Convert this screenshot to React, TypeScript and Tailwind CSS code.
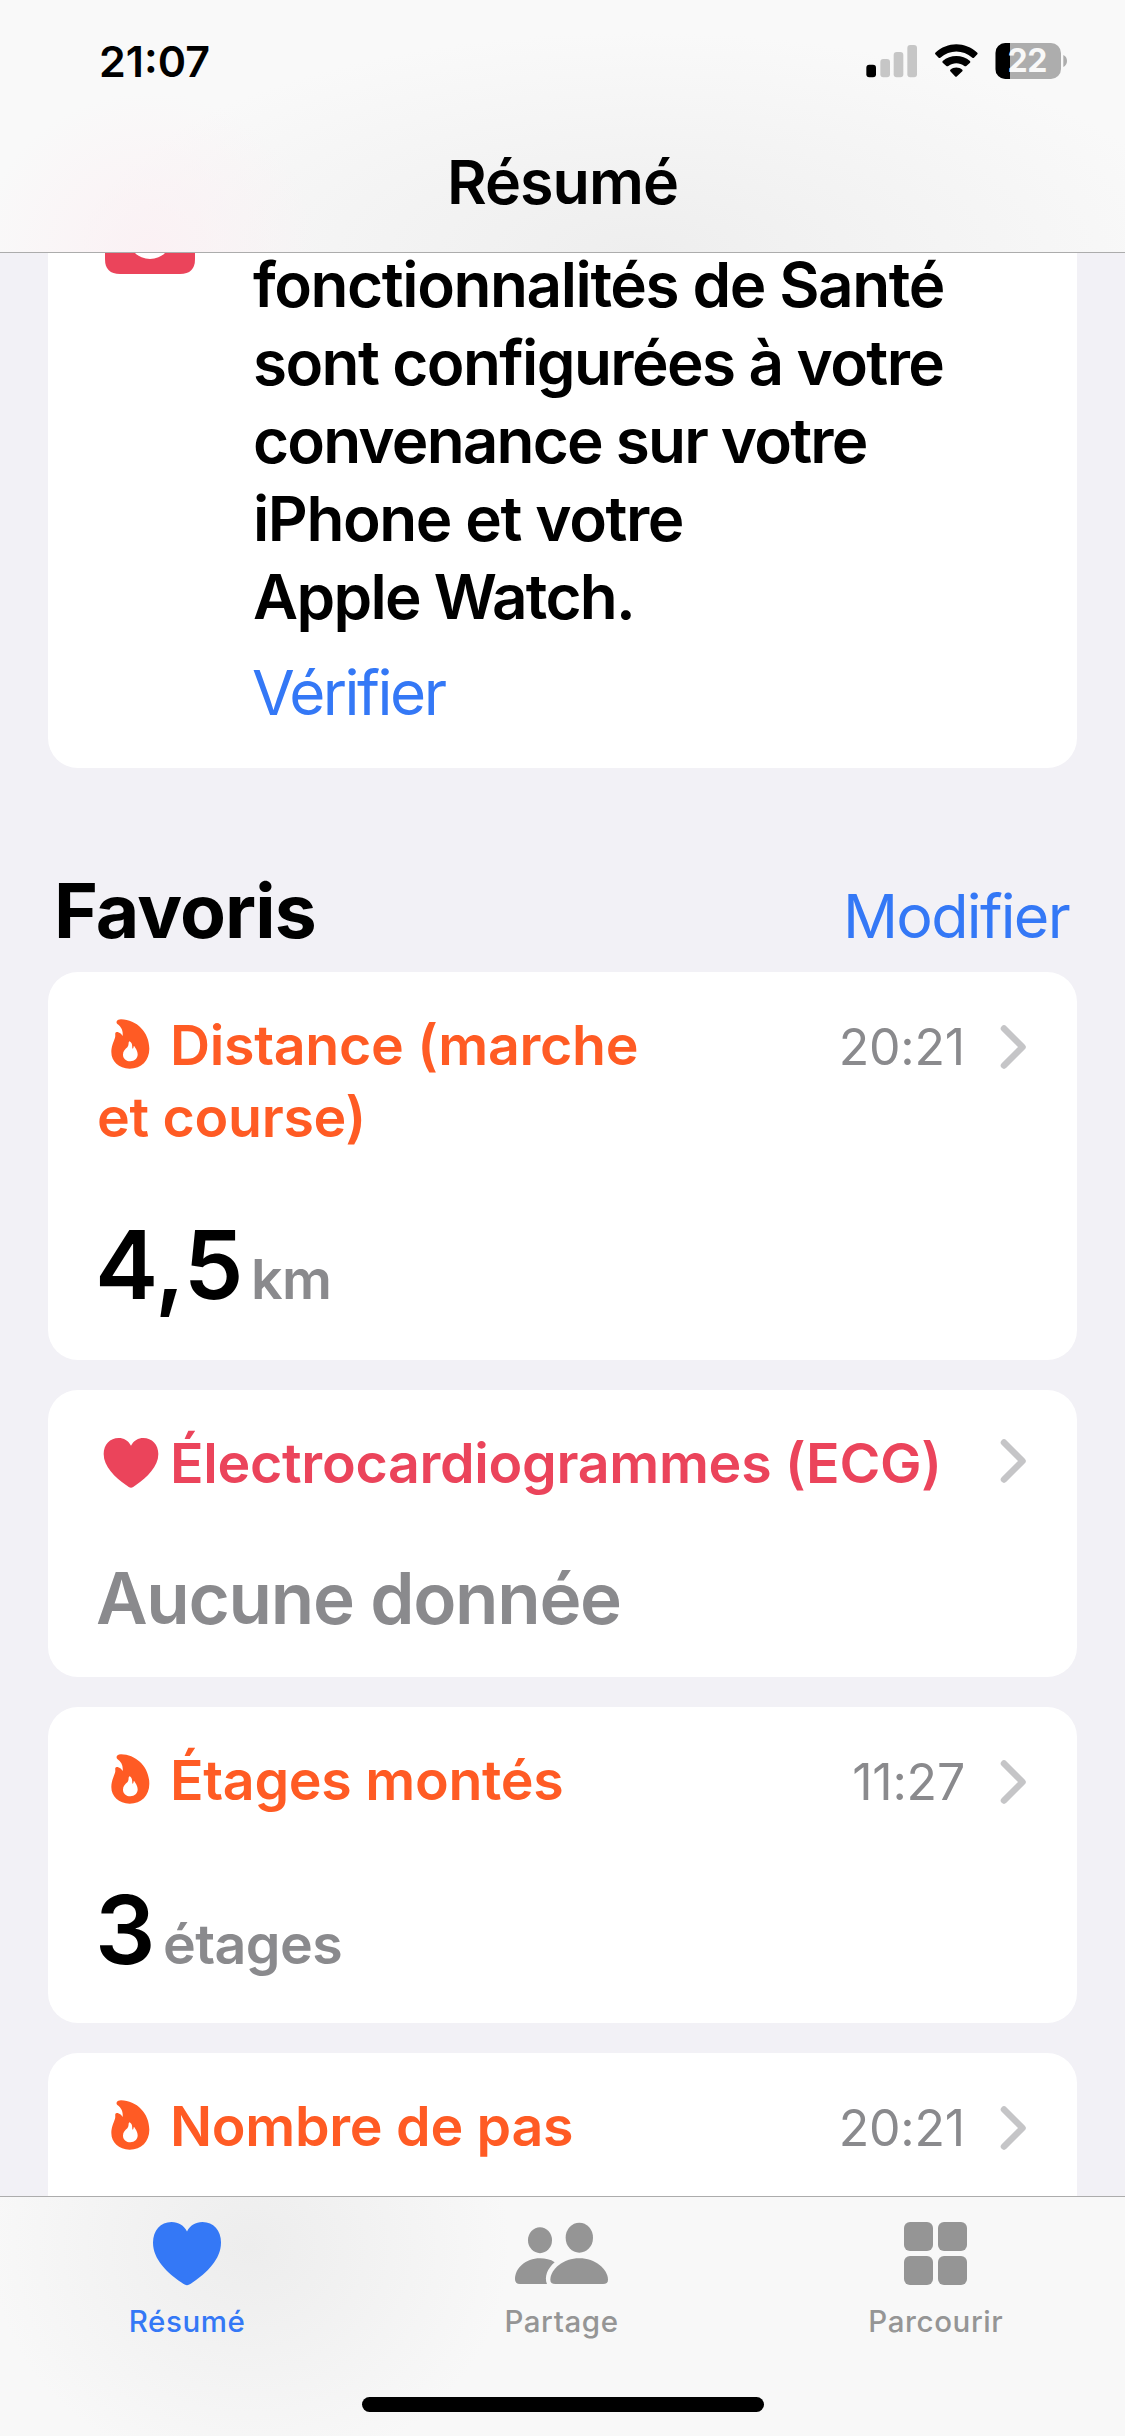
import type { ReactNode } from "react";

function FlameIcon() {
    return (
        <svg viewBox="51 51 216 168" className="inline-block w-[72px] h-[56px] mr-px align-[-8px]" fill="currentColor">
            <path
                fillRule="evenodd"
                d="M123 58C170 59 208 97 208 146C208 181 184 206 149 206C116 206 94 184 94 156C94 138 101 126 105 113C107 107 105 103 106 99C107 96 110 95 113 96C120 98 125 103 128 108C130 93 124 80 112 72C107 67 110 58 123 58ZM148 124C144 127 148 135 142 142C135 148 129 154 129 164C129 176 139 184 151 184C164 184 173 175 173 163C173 152 167 145 162 137C160 139 161 145 158 146C155 145 160 128 148 124Z"
            />
        </svg>
    );
}

function HeartIcon() {
    return (
        <svg viewBox="51 46 216 168" className="inline-block w-[72px] h-[56px] mr-px align-[-8px]" fill="currentColor">
            <path d="M153 78C145 63 131 55 116 55C90 55 71 75 71 103C71 141 105 173 138 196C144 201 149 204 153 204C157 204 162 201 168 196C201 173 235 141 235 103C235 75 216 55 190 55C175 55 161 63 153 78Z" />
        </svg>
    );
}

function Chevron() {
    return (
        <svg viewBox="0 0 26 44" className="w-[26px] h-[44px]" fill="none" stroke="#c5c5c7" strokeWidth="6.5" strokeLinecap="round" strokeLinejoin="round">
            <path d="M4 3.5L22.5 22L4 40.5" />
        </svg>
    );
}

function StatusIcons() {
    return (
        <svg viewBox="75 60 615 120" className="w-[205px] h-[40px]">
            <rect x="79" y="134" width="29" height="38" rx="9" fill="#000" />
            <rect x="121" y="117" width="29" height="55" rx="9" fill="#c6c6c6" />
            <rect x="161" y="96" width="29" height="76" rx="9" fill="#c6c6c6" />
            <rect x="202" y="75" width="29" height="97" rx="9" fill="#c6c6c6" />
            <path d="M286 98C322 64 376 64 412 98Q414 101 412 103L402 113Q400 115 397 113C368 88 330 88 301 113Q298 115 296 113L286 103Q284 101 286 98Z" />
            <path d="M308 123C331 103 367 103 390 123Q392 126 390 128L379 138Q376 140 373 138C358 127 340 127 325 138Q322 140 319 138L308 128Q306 126 308 123Z" />
            <path d="M331 149C341 140 357 140 367 149Q369 152 367 154L351 169Q348 172 345 169L331 154Q329 152 331 149Z" />
            <clipPath id="battery">
                <rect x="466" y="69" width="197" height="108" rx="30" />
            </clipPath>
            <g clipPath="url(#battery)">
                <rect x="466" y="69" width="197" height="108" fill="#adadad" />
                <rect x="466" y="69" width="44" height="108" fill="#000" />
            </g>
            <path d="M670 105C677 108 681 115 681 123C681 131 677 138 670 141Z" fill="#adadad" />
            <text x="562" y="157" textAnchor="middle" fill="#f8f8f8" fontSize="96" fontWeight="700" letterSpacing="-1">
                22
            </text>
        </svg>
    );
}

type CardProps = {
    icon: ReactNode;
    title: ReactNode;
    color: string;
    size: string;
    time?: string;
    children?: ReactNode;
};

function Card({ icon, title, color, size, time, children }: CardProps) {
    return (
        <article className={`${size} shrink-0 bg-white rounded-[30px] pt-[37px] pl-[49px] pr-[51px]`}>
            <div className="flex items-start justify-between">
                <h3 className={`${color} text-[55.5px] leading-[72px] font-semibold tracking-[-0.3px] whitespace-nowrap`}>
                    {icon}
                    {title}
                </h3>
                <div className={`flex items-center h-[72px] gap-[35px] ${time ? "mt-[2px]" : "-mt-[2px]"}`}>
                    {time && <span className="text-[50px] text-[#8a8a8d] tracking-[-0.2px]">{time}</span>}
                    <Chevron />
                </div>
            </div>
            {children}
        </article>
    );
}

function Value({ amount, unit }: { amount: string; unit: string }) {
    return (
        <p className="mt-[57px] -ml-[2px] flex items-baseline gap-[8px] leading-[110px]">
            <span className="text-[95px] font-semibold tracking-[-0.4px]">{amount}</span>
            <span className="text-[55.5px] font-semibold tracking-[-0.6px] text-[#8a8a8d]">{unit}</span>
        </p>
    );
}

export default function App() {
    return (
        <div className="w-[1125px] h-[2436px] flex flex-col overflow-hidden bg-[#f2f1f6] text-black font-['Inter',sans-serif]">
            {/* Status bar and title */}
            <header className="relative z-10 h-[253px] shrink-0 border-b border-[#acacac] bg-[radial-gradient(ellipse_170px_160px_at_150px_252px,#fbf1f4,transparent),radial-gradient(ellipse_560px_220px_at_640px_252px,#eeeeee,transparent)] bg-[#f9f9f9]">
                <div className="flex justify-between pt-[40px] pl-[99px] pr-[55px] h-[136px]">
                    <span className="-mt-px text-[43px] leading-[44px] font-semibold">21:07</span>
                    <StatusIcons />
                </div>
                <h1 className="text-center text-[61px] leading-[92px] font-semibold tracking-[-1px]">Résumé</h1>
            </header>

            <main className="-mt-2 flex-1 min-h-0 overflow-hidden px-[48px]">
                {/* Checklist card, scrolled under the header */}
                <section className="h-[523px] bg-white rounded-b-[30px] flex">
                    <div className="w-[205px] shrink-0 pl-[57px]">
                        <svg viewBox="0 0 90 29" className="w-[90px] h-[29px]">
                            <path d="M0 0H90V14Q90 29 75 29H15Q0 29 0 14Z" fill="#eb445b" />
                            <circle cx="45" cy="-8" r="22" fill="#fff" />
                        </svg>
                    </div>
                    <div className="pt-px text-[62px] leading-[78px]">
                        <p className="font-semibold tracking-[-1.4px]">
                            fonctionnalités de Santé
                            <br />
                            <span className="tracking-[-1.6px]">sont configurées à votre</span>
                            <br />
                            <span className="tracking-[-1.8px]">convenance sur votre</span>
                            <br />
                            iPhone et votre
                            <br />
                            <span className="tracking-[-1.7px]">Apple Watch.</span>
                        </p>
                        <a className="block mt-[18px] -ml-px text-[#3478f6] tracking-[-2.5px]">Vérifier</a>
                    </div>
                </section>

                <div className="flex items-baseline justify-between h-[204px] pt-[98px] pl-[6px] pr-[8px]">
                    <h2 className="text-[75px] leading-[90px] font-bold tracking-[-0.9px]">Favoris</h2>
                    <a className="text-[61px] text-[#3478f6] tracking-[-1.7px]">Modifier</a>
                </div>

                <div className="flex flex-col gap-[30px]">
                    <Card
                        icon={<FlameIcon />}
                        title={<>Distance (marche<br />et course)</>}
                        color="text-[#ff5b24]"
                        size="h-[388px]"
                        time="20:21"
                    >
                        <Value amount="4,5" unit="km" />
                    </Card>
                    <Card icon={<HeartIcon />} title="Électrocardiogrammes (ECG)" color="text-[#eb445b]" size="h-[287px]">
                        <p className="mt-[57px] -ml-px text-[71px] leading-[84px] font-semibold tracking-[-1.3px] text-[#8a8a8d]">Aucune donnée</p>
                    </Card>
                    <Card icon={<FlameIcon />} title="Étages montés" color="text-[#ff5b24]" size="h-[316px]" time="11:27">
                        <Value amount="3" unit="étages" />
                    </Card>
                    <Card icon={<FlameIcon />} title="Nombre de pas" color="text-[#ff5b24]" size="h-[316px]" time="20:21" />
                </div>
            </main>

            {/* Tab bar */}
            <footer className="relative z-10 h-[240px] shrink-0 flex flex-col border-t border-[#acacac] bg-[radial-gradient(ellipse_260px_230px_at_250px_50px,#ededed,transparent)] bg-[#f8f8f8]">
                <nav className="w-[1123px] grid grid-cols-3 text-[29.5px] leading-[36px] font-medium tracking-[0.6px] text-[#959595]">
                    <a className="flex flex-col items-center text-[#3478f6]">
                        <svg viewBox="0 0 68 64" className="mt-[25px] h-[64px] w-[68px]" fill="currentColor">
                            <path d="M34 9.5C31 3.5 25.500 0 18.500 0C7.500 0 0 8.500 0 20.500C0 37.500 14.500 51 28.500 60.500C31 62.300 32.700 63.300 34 63.300C35.300 63.300 37 62.300 39.500 60.500C53.500 51 68 37.500 68 20.500C68 8.500 60.500 0 49.500 0C42.500 0 37 3.500 34 9.500Z" />
                        </svg>
                        <span className="mt-[17px]">Résumé</span>
                    </a>
                    <a className="flex flex-col items-center">
                        <svg viewBox="102 96 285 192" className="mt-[25px] h-[64px] w-[95px]" fill="currentColor">
                            <ellipse cx="180" cy="150.500" rx="36" ry="39" />
                            <ellipse cx="298" cy="143" rx="41" ry="45" />
                            <path d="M224 217C212 208 196 205 180 205C136 205 105 235 105 268Q105 282 120 282H201C192 260 203 235 224 217Z" />
                            <path d="M298 205C250 205 212 237 211 269Q211 282 226 282H369Q384 282 384 269C383 237 346 205 298 205Z" />
                        </svg>
                        <span className="mt-[17px]">Partage</span>
                    </a>
                    <a className="flex flex-col items-center">
                        <div className="mt-[25px] h-[64px] grid grid-cols-2 gap-[5px] content-start">
                            <i className="size-[29px] rounded-[6px] bg-current" />
                            <i className="size-[29px] rounded-[6px] bg-current" />
                            <i className="size-[29px] rounded-[6px] bg-current" />
                            <i className="size-[29px] rounded-[6px] bg-current" />
                        </div>
                        <span className="mt-[17px]">Parcourir</span>
                    </a>
                </nav>
                <div className="mt-auto mb-[24px] mx-auto w-[402px] h-[15px] rounded-full bg-black" />
            </footer>
        </div>
    );
}
